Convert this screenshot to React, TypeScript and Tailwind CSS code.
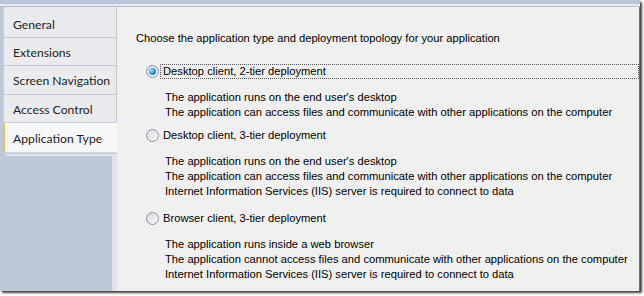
import React from "react";

const TABS = ["General", "Extensions", "Screen Navigation", "Access Control", "Application Type"];
const TAB_H = ["h-[31px] pt-[6px]", "h-[28px] pt-[4px]", "h-[29px] pt-[3px]", "h-[28px] pt-[4px]"];

const OPTIONS = [
  {
    label: "Desktop client, 2-tier deployment",
    checked: true,
    lines: [
      "The application runs on the end user's desktop",
      "The application can access files and communicate with other applications on the computer",
    ],
  },
  {
    label: "Desktop client, 3-tier deployment",
    checked: false,
    lines: [
      "The application runs on the end user's desktop",
      "The application can access files and communicate with other applications on the computer",
      "Internet Information Services (IIS) server is required to connect to data",
    ],
  },
  {
    label: "Browser client, 3-tier deployment",
    checked: false,
    lines: [
      "The application runs inside a web browser",
      "The application cannot access files and communicate with other applications on the computer",
      "Internet Information Services (IIS) server is required to connect to data",
    ],
  },
];

function Radio({ checked }: { checked: boolean }) {
  return (
    <div className="w-[13px] h-[13px] rounded-full border border-[#8e96a0] bg-gradient-to-br from-[#d8dbe0] to-[#f7f7f8] flex items-center justify-center shrink-0">
      {checked && (
        <div className="w-[7px] h-[7px] rounded-full bg-[radial-gradient(circle_at_35%_35%,#9fe0ff,#1f8fd6_55%,#0f5fa8)]" />
      )}
    </div>
  );
}

export default function App() {
  return (
    <div className="w-[644px] h-[296px] bg-white">
      <div className="w-[640px] h-[291px] bg-[#bdc9d7] shadow-[2px_2px_2px_rgba(0,0,0,0.75)] flex flex-col overflow-hidden">
        {/* top band */}
        <div className="h-[4px] bg-[#b9c6d5] shrink-0" />
        <div className="h-[2px] bg-[#e6eaf0] shrink-0" />
        <div className="h-[1px] bg-[#b3c0cf] shrink-0" />

        <div className="flex flex-1">
          {/* tabs */}
          <div className="w-[117px] flex flex-col font-['Lato',sans-serif] text-[12.2px] text-[#1e1e1e]">
            <div className="ml-[3px] flex flex-col">
              {TABS.map((t, i) => {
                const sel = i === TABS.length - 1;
                return sel ? (
                  <div
                    key={t}
                    className="h-[30px] flex items-center pt-[4px] pl-[8px] bg-[#f7f7f7] border-l-2 border-[#f2c15a] border-b border-b-[#d6dae1]"
                  >
                    {t}
                  </div>
                ) : (
                  <div
                    key={t}
                    className={
                      TAB_H[i] +
                      " flex items-center pl-[9px] bg-[#eaebef] border border-[#c6ccd6] border-t-0 " +
                      (i === 0 ? "border-t rounded-tl-[3px]" : "")
                    }
                  >
                    {t}
                  </div>
                );
              })}
            </div>
            <div className="flex-1 ml-[6px] mt-[1px] border-t-[2px] border-r-[5px] border-[#dfe3ea] bg-[#bdc9d7]" />
          </div>

          {/* content */}
          <div className="flex-1 bg-[#f0f0f0] border-r border-[#6d6d6d] pl-[19px] pt-[24px] font-['Liberation_Sans',Arial,sans-serif] text-[11.2px] text-black leading-[15px]">
            <div>Choose the application type and deployment topology for your application</div>
            <div className="mt-[18px] flex flex-col">
              {OPTIONS.map((o, i) => (
                <div key={o.label} className={i === 0 ? "" : i === 1 ? "mt-[8px]" : "mt-[12px]"}>
                  <div className="flex items-center h-[15px] pl-[10px]">
                    <Radio checked={o.checked} />
                    <div
                      className={
                        "ml-[1px] pl-[2px] h-[15px] flex items-center flex-1 " +
                        (o.checked ? "border border-dotted border-[#555]" : "border border-transparent")
                      }
                    >
                      {o.label}
                    </div>
                  </div>
                  <div className="mt-[11px] pl-[29px]">
                    {o.lines.map((l) => (
                      <div key={l}>{l}</div>
                    ))}
                  </div>
                </div>
              ))}
            </div>
          </div>
        </div>
      </div>
    </div>
  );
}
